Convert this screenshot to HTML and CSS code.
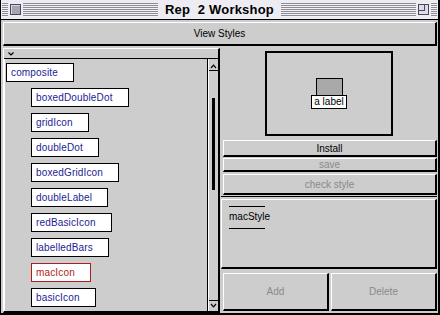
FILE: index.html
```html
<!DOCTYPE html>
<html lang="en">
<head>
    <meta charset="UTF-8">
    <meta name="viewport" content="width=device-width, initial-scale=1.0">
    <title>Rep 2 Workshop</title>
    <link rel="stylesheet" href="styles.css">
</head>
<body>
    <div class="window">
        <div class="titlebar">
            <span class="stripes stripes-end"></span>
            <span class="winbox close-box"></span>
            <span class="stripes"></span>
            <span class="title">Rep&nbsp; 2 Workshop</span>
            <span class="stripes"></span>
            <span class="winbox zoom-box"><span class="zoom-inner"></span></span>
            <span class="stripes stripes-end"></span>
        </div>

        <button class="btn view-btn" type="button">View Styles</button>

        <div class="main">
            <div class="left-pane">
                <div class="list-head">
                    <svg width="6" height="4" viewBox="0 0 6 4"><polyline points="0.5,0.5 3,3 5.5,0.5" fill="none" stroke="#000" stroke-width="1.2"/></svg>
                </div>
                <div class="list-wrap">
                    <div class="style-list">
                        <div class="item">composite</div>
                        <div class="item child">boxedDoubleDot</div>
                        <div class="item child">gridIcon</div>
                        <div class="item child">doubleDot</div>
                        <div class="item child">boxedGridIcon</div>
                        <div class="item child">doubleLabel</div>
                        <div class="item child">redBasicIcon</div>
                        <div class="item child">labelledBars</div>
                        <div class="item child selected">macIcon</div>
                        <div class="item child">basicIcon</div>
                    </div>
                    <div class="scrollbar">
                        <div class="arrow-box">
                            <svg width="7" height="5" viewBox="0 0 7 5"><polyline points="1,4 3.5,1.2 6,4" fill="none" stroke="#000" stroke-width="1.2"/></svg>
                        </div>
                        <div class="track"><div class="thumb"></div></div>
                        <div class="arrow-box">
                            <svg width="7" height="5" viewBox="0 0 7 5"><polyline points="1,1 3.5,3.8 6,1" fill="none" stroke="#000" stroke-width="1.2"/></svg>
                        </div>
                    </div>
                </div>
            </div>

            <div class="right-pane">
                <div class="preview">
                    <div class="preview-frame">
                        <div class="icon-sample">
                            <div class="icon-square"></div>
                            <div class="icon-label">a label</div>
                        </div>
                    </div>
                </div>
                <button class="btn install-btn" type="button">Install</button>
                <button class="btn save-btn disabled" type="button">save</button>
                <button class="btn check-btn disabled" type="button">check style</button>
                <div class="rule"></div>
                <div class="style-box">
                    <div class="style-line"></div>
                    <div class="style-name">macStyle</div>
                    <div class="style-line"></div>
                </div>
                <div class="actions">
                    <button class="btn disabled" type="button">Add</button>
                    <button class="btn disabled" type="button">Delete</button>
                </div>
            </div>
        </div>
    </div>
</body>
</html>
```
FILE: styles.css
```css
body {
    margin: 0;
    font-family: 'Liberation Sans', Arial, sans-serif;
    font-size: 10px;
    background-color: #cdcdcd;
}

.window {
    width: 440px;
    height: 315px;
    box-sizing: border-box;
    display: flex;
    flex-direction: column;
    background-color: #cdcdcd;
    border-left: 1px solid #000;
    border-right: 2px solid #000;
    border-bottom: 2px solid #000;
    padding: 0 1px 0 2px;
}

/* title bar */
.titlebar {
    height: 20px;
    box-sizing: border-box;
    margin: 0 -1px 0 -2px;
    padding: 0 1px;
    display: flex;
    align-items: center;
    background-color: #ececf2;
    border-bottom: 1px solid #000;
}

.stripes {
    flex: 1;
    height: 14px;
    background: repeating-linear-gradient(to bottom, #8c8c96 0 1px, #f2f2f6 1px 2px);
}

.stripes-end {
    flex: 0 0 6px;
}

.title {
    padding: 0 7px;
    font-size: 13px;
    font-weight: bold;
    color: #000;
    letter-spacing: 0.2px;
}

.winbox {
    width: 11px;
    height: 11px;
    margin: 0 2px;
    box-sizing: border-box;
    border: 1px solid #4a4a55;
    position: relative;
}

.close-box {
    background-color: #a4a4b4;
    box-shadow: inset 1px 1px 0 #d8d8e4;
}

.zoom-box {
    background-color: #dcdcec;
}

.zoom-inner {
    position: absolute;
    left: 0;
    top: 0;
    width: 5px;
    height: 5px;
    border-right: 1px solid #4a4a55;
    border-bottom: 1px solid #4a4a55;
}

/* buttons */
.btn {
    display: block;
    margin: 0;
    padding: 0;
    box-sizing: border-box;
    font-family: 'Liberation Sans', Arial, sans-serif;
    font-size: 10px;
    color: #000;
    background-color: #cdcdcd;
    border-top: 1px solid #fff;
    border-left: 1px solid #fff;
    border-right: 2px solid #000;
    border-bottom: 2px solid #000;
    border-radius: 0;
}

.btn.disabled {
    color: #8a8a8a;
}

.view-btn {
    height: 24px;
    margin-top: 2px;
    width: 100%;
}

.main {
    flex: 1;
    display: flex;
    gap: 1px;
    margin-top: 2px;
}

/* left pane */
.left-pane {
    width: 217px;
    box-sizing: border-box;
    display: flex;
    flex-direction: column;
    border-top: 1px solid #fff;
    border-left: 1px solid #fff;
    border-right: 2px solid #000;
    border-bottom: 2px solid #000;
}

.list-head {
    height: 10px;
    box-sizing: border-box;
    border-bottom: 1px solid #000;
    padding: 3px 0 0 4px;
    display: flex;
    align-items: flex-start;
}

.list-wrap {
    flex: 1;
    display: flex;
}

.style-list {
    flex: 1;
    display: flex;
    flex-direction: column;
    align-items: flex-start;
    gap: 6px;
    padding: 4px 0 0 1px;
    border-left: 1px solid #fff;
}

.item {
    height: 19px;
    box-sizing: border-box;
    line-height: 17px;
    padding: 0 15px 0 4px;
    background-color: #fff;
    border: 1px solid #000;
    color: #1c1c94;
    letter-spacing: 0.15px;
}

.item.child {
    margin-left: 25px;
}

.item.selected {
    color: #b01c1c;
    border-color: #b01c1c;
}

.scrollbar {
    width: 11px;
    box-sizing: border-box;
    display: flex;
    flex-direction: column;
    align-items: center;
    border-left: 1px solid #000;
    box-shadow: inset 1px 0 0 #fff;
    padding: 3px 0 2px 1px;
}

.arrow-box {
    width: 9px;
    height: 9px;
    box-sizing: border-box;
    border-bottom: 1px solid #000;
    display: flex;
    align-items: center;
    justify-content: center;
}

.scrollbar .arrow-box:last-child {
    border-bottom: none;
    border-top: 1px solid #000;
}

.track {
    flex: 1;
    width: 100%;
    display: flex;
    justify-content: center;
}

.thumb {
    width: 3px;
    height: 92px;
    margin-top: 27px;
    background-color: #000;
}

/* right pane */
.right-pane {
    flex: 1;
    display: flex;
    flex-direction: column;
}

.preview {
    height: 91px;
    display: flex;
    align-items: center;
    justify-content: center;
}

.preview-frame {
    width: 128px;
    height: 85px;
    box-sizing: border-box;
    border: 2px solid #000;
    display: flex;
    align-items: center;
    justify-content: center;
}

.icon-sample {
    display: flex;
    flex-direction: column;
    align-items: center;
}

.icon-square {
    width: 27px;
    height: 18px;
    box-sizing: border-box;
    border: 1px solid #000;
    background-color: #a9a9a9;
}

.icon-label {
    height: 14px;
    box-sizing: border-box;
    margin-top: -1px;
    padding: 0 2px;
    line-height: 12px;
    background-color: #fff;
    border: 1px solid #000;
    color: #000;
}

.right-pane .btn {
    margin-left: 2px;
    margin-right: 0;
}

.install-btn {
    height: 17px;
    margin-top: 1px;
}

.save-btn {
    height: 14px;
    margin-top: 1px;
}

.check-btn {
    height: 21px;
    margin-top: 2px;
}

.rule {
    height: 1px;
    margin-top: 1px;
    background-color: #000;
}

.style-box {
    height: 70px;
    margin-top: 2px;
    box-sizing: border-box;
    padding: 6px 0 0 7px;
    border-top: 1px solid #fff;
    border-left: 1px solid #fff;
    border-right: 2px solid #000;
    border-bottom: 2px solid #000;
}

.style-line {
    width: 36px;
    height: 1px;
    background-color: #000;
}

.style-name {
    height: 12px;
    line-height: 12px;
    margin: 4px 0 5px;
    color: #000;
}

.actions {
    height: 38px;
    margin-top: 4px;
    display: flex;
    gap: 2px;
    padding-left: 2px;
}

.actions .btn {
    flex: 1;
    margin: 0;
}
```
